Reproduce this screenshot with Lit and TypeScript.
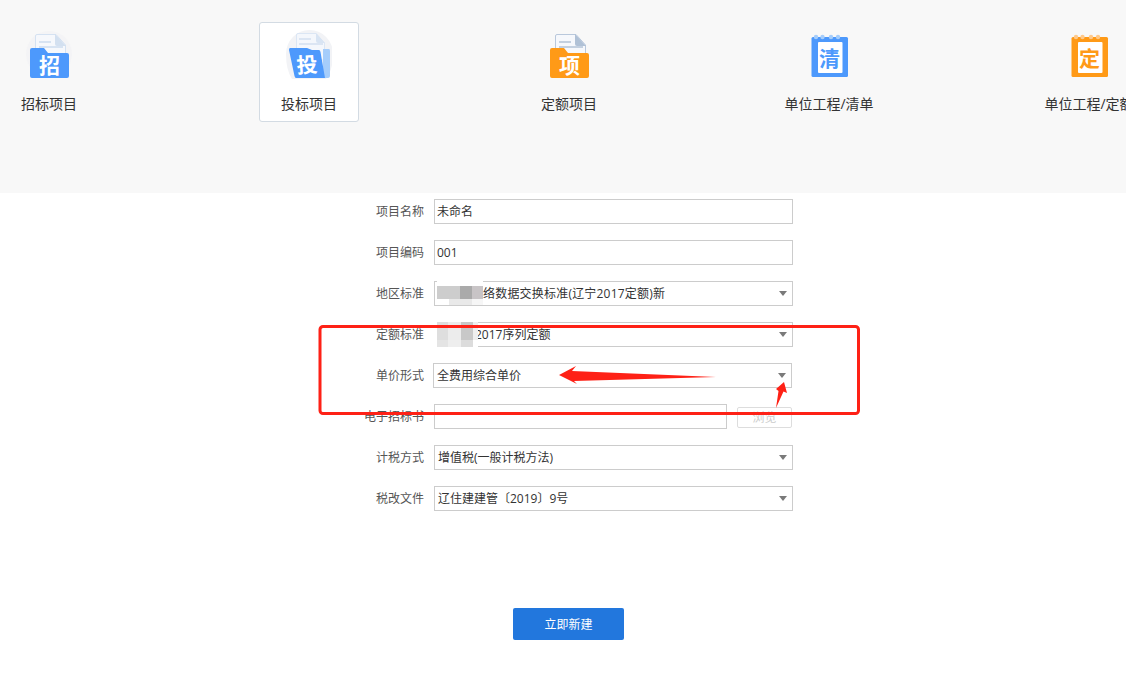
import { LitElement, html, css, svg } from "lit";
import { customElement } from "lit/decorators.js";

function folderIcon(ch: string, main: string, docStroke: string, fold: string, lines: string, halo: boolean) {
  return svg`<svg class="ico" viewBox="0 0 46 50" width="46" height="50">
    ${halo ? svg`<circle cx="23" cy="24" r="23" fill="#f4f4f6"/>` : ""}
    <path d="M11 4.500H30L39.500 15V30H9.500V6Q9.500 4.500 11 4.500Z" fill="#f6f8fc" stroke="${docStroke}"/>
    <path d="M29 4L40 16H31Q29 16 29 14Z" fill="${fold}"/>
    <rect x="13" y="11" width="12" height="2" fill="${lines}"/>
    <rect x="13" y="16" width="24" height="2" fill="${lines}"/>
    <path d="M6 18H18L22 23H41Q43 23 43 25V46Q43 48 41 48H6Q4 48 4 46V20Q4 18 6 18Z" fill="${main}"/>
    <text x="23.500" y="43" class="g" font-size="21" fill="#fff" text-anchor="middle">${ch}</text>
  </svg>`;
}

function tiltIcon(ch: string) {
  return svg`<svg class="ico" viewBox="0 0 46 50" width="46" height="50">
    <path d="M0 24A23.500 24 0 0 1 47 24Q47 40 40 49H6Q0 40 0 24Z" fill="#f2f3f6"/>
    <path d="M12 3.500H30L38.500 13V30H10.500V5Q10.500 3.500 12 3.500Z" fill="#f4f7fc" stroke="#dbe6f4"/>
    <path d="M30 3L39 13H32Q30 13 30 11Z" fill="#d8e4f3"/>
    <rect x="13" y="8" width="12" height="2" fill="#dbe5f3"/>
    <rect x="13" y="13" width="24" height="2" fill="#dbe5f3"/>
    <path d="M37 19H43Q44 19 44 21V46Q44 48 42 48H37Z" fill="#a5cdfb"/>
    <path d="M4 18H21L26 20H33Q34 20 34.500 22L39 48H10Q9 48 8.500 46L3 20Q3 18 4 18Z" fill="#4d99fc"/>
    <text x="21" y="42.500" class="g" font-size="21" fill="#fff" text-anchor="middle" transform="rotate(-4 21 35)">${ch}</text>
  </svg>`;
}

function bookIcon(ch: string, main: string, ring: string) {
  const rings = [10, 16.500, 25, 32].map(
    (x) => svg`<circle cx="${x}" cy="7" r="2.200" fill="${ring}"/>`
  );
  return svg`<svg class="ico" viewBox="0 0 46 50" width="46" height="50">
    <rect x="5.500" y="7" width="36.500" height="40" rx="1.500" fill="${main}"/>
    ${rings}
    <rect x="12" y="12" width="24.500" height="31" rx="1" fill="#fff"/>
    <text x="23.500" y="35.500" class="g" font-size="21" fill="${main}" text-anchor="middle">${ch}</text>
  </svg>`;
}

const tiles = [
  { name: "招标项目", icon: folderIcon("招", "#4d99fc", "#d5e2f2", "#d3e0f0", "#d7e3f2", true), active: false },
  { name: "投标项目", icon: tiltIcon("投"), active: true },
  { name: "定额项目", icon: folderIcon("项", "#ff9a17", "#b9c8dc", "#b0c1d6", "#c3d0e0", false), active: false },
  { name: "单位工程/清单", icon: bookIcon("清", "#4d99fc", "#a5cdfb"), active: false },
  { name: "单位工程/定额", icon: bookIcon("定", "#ff9a17", "#ffc98a"), active: false },
];

const rows: { label: string; type: string; value: string; indent?: number; pasted?: boolean; wide?: boolean }[] = [
  { label: "项目名称", type: "input", value: "未命名" },
  { label: "项目编码", type: "input", value: "001" },
  { label: "地区标准", type: "select", value: "络数据交换标准(辽宁2017定额)新", indent: 48, wide: true },
  { label: "定额标准", type: "select", value: "2017序列定额", indent: 40 },
  { label: "单价形式", type: "select", value: "全费用综合单价", pasted: true },
  { label: "电子招标书", type: "file", value: "" },
  { label: "计税方式", type: "select", value: "增值税(一般计税方法)" },
  { label: "税改文件", type: "select", value: "辽住建建管〔2019〕9号" },
];

type Band = [number, [number, string][]];

const mosaic1: Band[] = [
  [9, [[46, "#ffffff"]]],
  [13, [[23, "#cdcdcd"], [12, "#aaaaaa"], [11, "#c8c4c6"]]],
  [6, [[12, "#ffffff"], [23, "#e9e9e9"], [11, "#f6f6f6"]]],
];

const mosaic2: Band[] = [
  [18, [[9, "#ffffff"], [11, "#dedede"], [13, "#ececec"], [12, "#c8c8c8"], [5, "#eeeeee"]]],
  [7, [[9, "#ffffff"], [11, "#e4e4e4"], [13, "#eeeeee"], [12, "#dcdcdc"], [5, "#ffffff"]]],
];

@customElement("app-root")
export class AppRoot extends LitElement {
  static styles = css`
    :host {
      display: block;
      position: relative;
      width: 1126px;
      height: 697px;
      overflow: hidden;
      background: #fff;
      font-family: "Open Sans", "Noto Sans CJK SC", sans-serif;
      font-size: 12px;
      color: #333;
    }
    .top {
      height: 193px;
      box-sizing: border-box;
      background: #f8f8f8;
      padding: 22px 0 0 0;
      display: flex;
      gap: 160px;
      overflow: hidden;
    }
    .tile {
      flex: 0 0 100px;
      width: 100px;
      height: 100px;
      box-sizing: border-box;
      border: 1px solid transparent;
      border-radius: 3px;
      display: flex;
      flex-direction: column;
      align-items: center;
      white-space: nowrap;
      font-size: 14px;
      line-height: 20px;
      padding-top: 7px;
    }
    .tile:first-child { margin-left: -1px; }
    .tile.on {
      background: #fff;
      border-color: #d3dbe3;
    }
    .ico { display: block; flex: none; }
    .ico .g { font-family: "Noto Sans CJK SC", sans-serif; font-weight: 700; }
    .tile .name { margin-top: 14px; }
    .form {
      margin: 6px 0 0 364px;
      display: flex;
      flex-direction: column;
      gap: 16px;
      width: 429px;
    }
    .row {
      display: flex;
      align-items: center;
      gap: 10px;
      height: 25px;
    }
    .lab {
      flex: 0 0 60px;
      text-align: right;
      color: #555;
      line-height: 25px;
      height: 25px;
      white-space: nowrap;
    }
    .box {
      flex: 1;
      height: 25px;
      box-sizing: border-box;
      border: 1px solid #ccc;
      background: #fff;
      padding: 0 2px 1px;
      font: inherit;
      color: #333;
      outline: none;
      min-width: 0;
      border-radius: 0;
    }
    .sel {
      display: flex;
      align-items: center;
      padding-left: 3px;
      white-space: nowrap;
    }
    .sel::after {
      content: "";
      margin: 1px 3px 0 auto;
      width: 0;
      height: 0;
      border-left: 4px solid transparent;
      border-right: 4px solid transparent;
      border-top: 5px solid #7a7a7a;
    }
    .pasted { margin: 0 1px 0 -1px; }
    .wide { letter-spacing: 0.2px; }
    .browse {
      flex: 0 0 55px;
      height: 21px;
      box-sizing: border-box;
      margin: 2px 1px 0 0;
      border: 1px solid #ddd;
      border-radius: 2px;
      background: #fff;
      color: #ccc;
      font: inherit;
      padding: 0 0 1px;
      text-align: center;
    }
    .go {
      display: block;
      margin: 97px 0 0 513px;
      width: 111px;
      height: 32px;
      border: 0;
      border-radius: 2px;
      background: #2277dd;
      color: #fff;
      font: inherit;
      padding: 0;
    }
    .mosaic {
      position: absolute;
      display: flex;
      flex-direction: column;
      filter: blur(0.5px);
    }
    .band { display: flex; }
    .band i { display: block; }
    .m1 { left: 437px; top: 277px; }
    .m2 { left: 428px; top: 322px; }
    .ann {
      position: absolute;
      left: 0;
      top: 0;
      pointer-events: none;
    }
  `;

  private mosaic(cls: string, bands: Band[]) {
    return html`<div class="mosaic ${cls}">
      ${bands.map(
        ([h, cells]) => html`<div class="band" style="height:${h}px">
          ${cells.map(([w, c]) => html`<i style="width:${w}px;background:${c}"></i>`)}
        </div>`
      )}
    </div>`;
  }

  render() {
    return html`
      <div class="top">
        ${tiles.map(
          (t) => html`<div class="tile ${t.active ? "on" : ""}">${t.icon}<span class="name">${t.name}</span></div>`
        )}
      </div>
      <div class="form">
        ${rows.map(
          (r) => html`<div class="row">
            <span class="lab">${r.label}</span>
            ${r.type === "input"
              ? html`<input class="box" .value=${r.value} />`
              : r.type === "file"
              ? html`<div class="box"></div><button class="browse">浏览</button>`
              : html`<div class="box sel ${r.pasted ? "pasted" : ""} ${r.wide ? "wide" : ""}" style=${r.indent ? `padding-left:${r.indent}px` : ""}>${r.value}</div>`}
          </div>`
        )}
      </div>
      <button class="go">立即新建</button>
      ${this.mosaic("m1", mosaic1)}
      ${this.mosaic("m2", mosaic2)}
      <svg class="ann" width="1126" height="697" viewBox="0 0 1126 697">
        <rect x="320" y="326.500" width="538.500" height="87" rx="3" fill="none" stroke="#fe2116" stroke-width="3"/>
        <path d="M559 375L576 366L572 371L716 377L574 381L577 384Z" fill="#fe2116"/>
        <path d="M784 382L787 393L783.500 391.500L776 408L778.500 391L776 389Z" fill="#fe2116"/>
      </svg>
    `;
  }
}
